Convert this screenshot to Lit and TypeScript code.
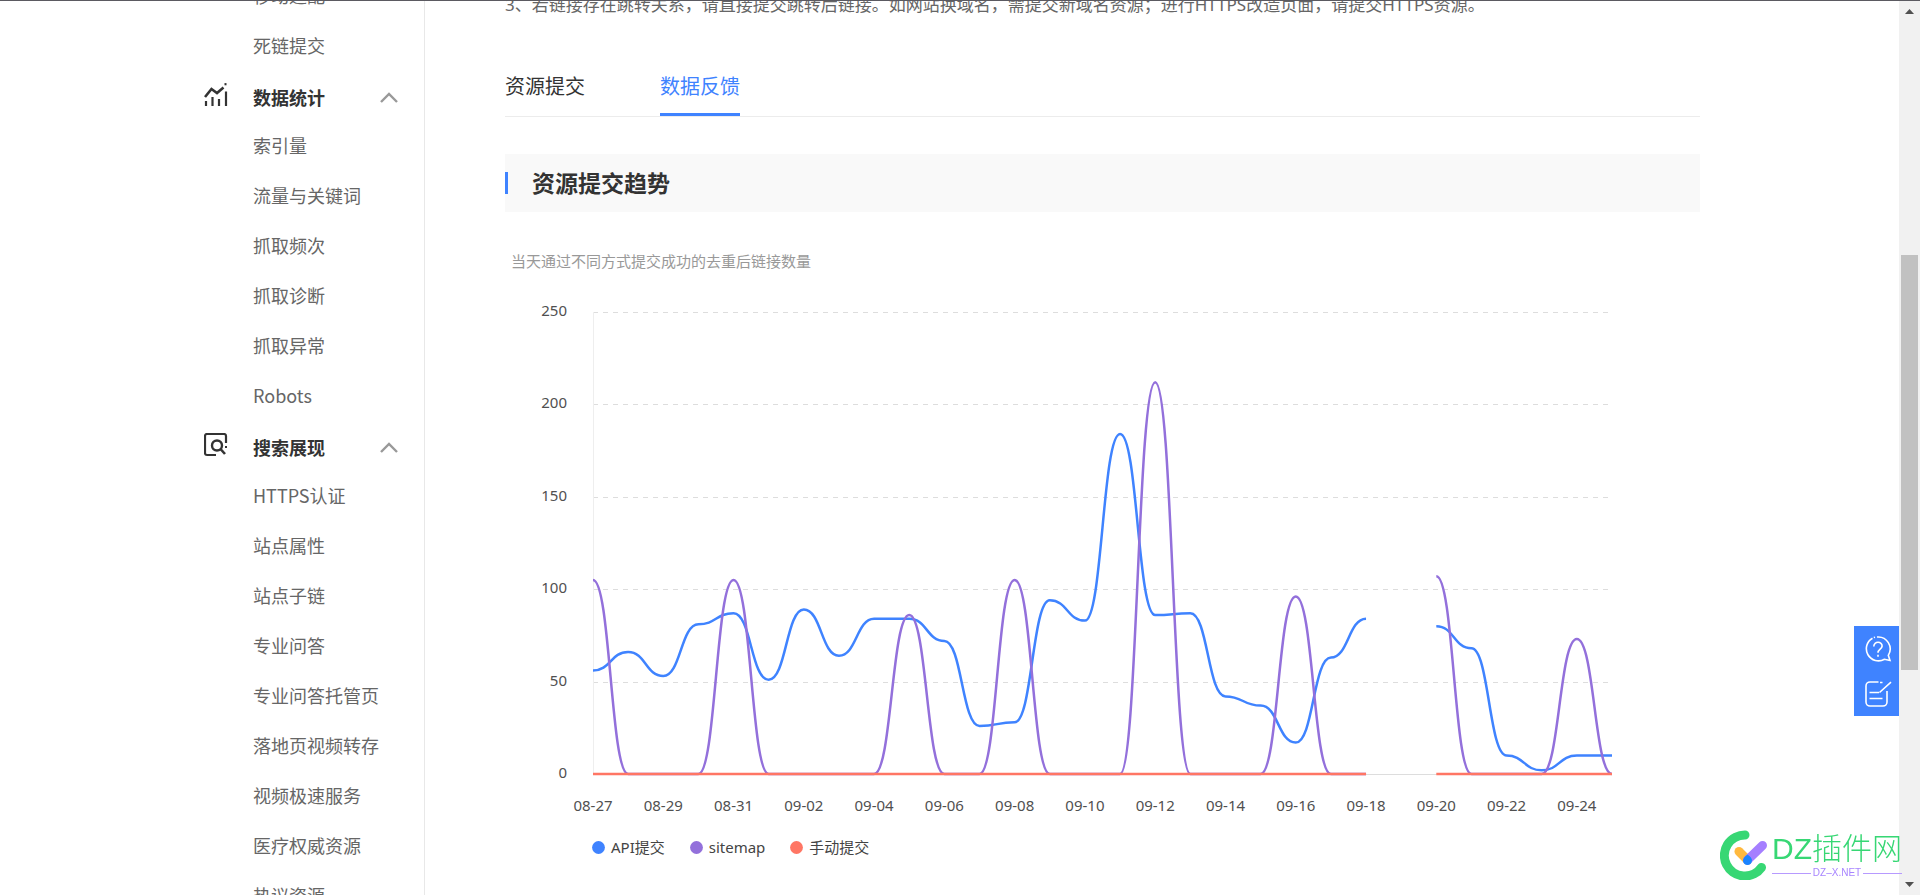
import { LitElement, html, svg, css } from "lit";
import { customElement, property, state } from "lit/decorators.js";
import { classMap } from "lit/directives/class-map.js";

type Value = number | null;

interface Series {
  name: string;
  color: string;
  width: number;
  data: Value[];
}

interface MenuGroup {
  title: string;
  icon: "stats" | "search";
  items: string[];
}

const leading = ["移动适配", "死链提交"];

const groups: MenuGroup[] = [
  {
    title: "数据统计",
    icon: "stats",
    items: ["索引量", "流量与关键词", "抓取频次", "抓取诊断", "抓取异常", "Robots"],
  },
  {
    title: "搜索展现",
    icon: "search",
    items: [
      "HTTPS认证",
      "站点属性",
      "站点子链",
      "专业问答",
      "专业问答托管页",
      "落地页视频转存",
      "视频极速服务",
      "医疗权威资源",
      "热议资源",
    ],
  },
];

const icons = {
  stats: html`<svg width="24" height="24" viewBox="0 0 24 24" fill="none" stroke="#333" stroke-width="2.200">
    <path d="M2 18v5M8.500 14v9M15 16v7M22 8.500V23" />
    <path d="M1 14 7.500 6l5.500 4 6.500-5.500" stroke-width="2.600" />
    <path d="M20.500 1.200h2" />
  </svg>`,
  search: html`<svg width="24" height="24" viewBox="0 0 24 24" fill="none" stroke="#333" stroke-width="2.200">
    <path d="M12 22H3a2 2 0 0 1-2-2V3a2 2 0 0 1 2-2h17a2 2 0 0 1 2 2v7" />
    <circle cx="13" cy="12.500" r="5" stroke-width="2.400" />
    <path d="m16.500 16 4.500 5" stroke-width="2.600" />
    <path d="M21 14h2" />
  </svg>`,
};

@customElement("side-menu")
export class SideMenu extends LitElement {
  static styles = css`
    :host {
      display: block;
      border-right: 1px solid #e8e8e8;
      font-family: "Noto Sans CJK SC", sans-serif;
    }
    .list {
      margin: 0;
      padding: 0;
      list-style: none;
    }
    .item {
      display: flex;
      align-items: center;
      height: 50px;
      padding-left: 49px;
      color: #666;
      font-size: 18px;
      line-height: 26px;
      text-decoration: none;
      white-space: nowrap;
    }
    .head {
      display: flex;
      align-items: center;
      box-sizing: border-box;
      width: 100%;
      height: 50px;
      padding: 4px 26px 0 0;
      border: 0;
      background: none;
      color: #333;
      font-family: inherit;
      font-size: 18px;
      font-weight: 700;
      line-height: 26px;
      text-align: left;
      cursor: pointer;
    }
    .icon {
      display: flex;
      width: 49px;
      padding-bottom: 4px;
    }
    .label {
      flex: 1;
    }
    .arrow.closed {
      transform: rotate(180deg);
    }
  `;

  @state() private closed: string[] = [];

  private toggle(title: string) {
    this.closed = this.closed.includes(title)
      ? this.closed.filter((t) => t !== title)
      : [...this.closed, title];
  }

  private renderItems(items: string[]) {
    return html`<ul class="list">
      ${items.map((item) => html`<li><a class="item" href="#">${item}</a></li>`)}
    </ul>`;
  }

  render() {
    return html`<nav aria-label="侧边导航">
      ${this.renderItems(leading)}
      ${groups.map((group) => {
        const closed = this.closed.includes(group.title);
        return html`
          <button class="head" aria-expanded=${closed ? "false" : "true"} @click=${() => this.toggle(group.title)}>
            <span class="icon">${icons[group.icon]}</span>
            <span class="label">${group.title}</span>
            <svg
              class=${classMap({ arrow: true, closed })}
              width="18"
              height="11"
              viewBox="0 0 18 11"
              fill="none"
              stroke="#999"
              stroke-width="2.400"
            >
              <path d="M1 10 9 2l8 8" />
            </svg>
          </button>
          ${closed ? null : this.renderItems(group.items)}
        `;
      })}
    </nav>`;
  }
}

const plot = { left: 88, right: 1107, top: 22, bottom: 484, width: 1195, height: 536 };

@customElement("trend-chart")
export class TrendChart extends LitElement {
  static styles = css`
    :host {
      display: block;
      color: #444;
      font-size: 15px;
    }
    .plot {
      display: block;
      width: 100%;
      height: auto;
    }
    .tick {
      fill: #505050;
      font-size: 15px;
    }
    .legend {
      display: flex;
      gap: 25px;
      margin: 0;
      padding: 11px 0 0 87px;
      list-style: none;
      line-height: 20px;
    }
    .entry {
      display: flex;
      align-items: center;
      gap: 6px;
    }
    .dot {
      width: 13px;
      height: 13px;
    }
  `;

  @property({ attribute: false }) labels: string[] = [];
  @property({ attribute: false }) series: Series[] = [];
  @property({ type: Number }) max = 250;

  private x(index: number) {
    return plot.left + ((plot.right - plot.left) * index) / (this.labels.length - 1);
  }

  private y(value: number) {
    return plot.bottom - ((plot.bottom - plot.top) * value) / this.max;
  }

  /** Smooth line that stays level at each point and breaks at missing days. */
  private path(data: Value[]) {
    let d = "";
    for (let i = 0; i < data.length; i++) {
      const value = data[i];
      if (value === null) continue;
      const x = this.x(i);
      const y = this.y(value);
      const prev = i > 0 ? data[i - 1] : null;
      if (prev === null) {
        d += `M${x} ${y}`;
        continue;
      }
      const mid = (this.x(i - 1) + x) / 2;
      d += `C${mid} ${this.y(prev)} ${mid} ${y} ${x} ${y}`;
    }
    return d;
  }

  render() {
    const ticks = [0, 50, 100, 150, 200, 250];
    return html`
      <svg class="plot" viewBox="0 0 ${plot.width} ${plot.height}" role="img" aria-label="资源提交趋势">
        ${ticks.map(
          (tick) => svg`
            <text class="tick" x="62" y=${this.y(tick) + 4} text-anchor="end">${tick}</text>
            <line x1=${plot.left} x2=${plot.right - 3} y1=${Math.round(this.y(tick)) + 0.5} y2=${
              Math.round(this.y(tick)) + 0.5
            } stroke="#ddd" stroke-dasharray=${tick ? "5 5" : "none"} />
          `,
        )}
        <line x1="88.500" x2="88.500" y1=${plot.top} y2=${plot.bottom} stroke="#eee" />
        ${this.labels.map((label, i) =>
          i % 2 ? null : svg`<text class="tick" x=${this.x(i)} y="521" text-anchor="middle">${label}</text>`,
        )}
        ${this.series.map(
          (s) => svg`<path d=${this.path(s.data)} fill="none" stroke=${s.color} stroke-width=${s.width} />`,
        )}
      </svg>
      <ul class="legend">
        ${this.series.map(
          (s) => html`<li class="entry">
            <svg class="dot" viewBox="0 0 13 13"><circle cx="6.500" cy="6.500" r="6.400" fill=${s.color} /></svg>
            <span>${s.name}</span>
          </li>`,
        )}
      </ul>
    `;
  }
}

const days = Array.from({ length: 30 }, (_, i) => {
  const day = 27 + i;
  return day <= 31 ? `08-${day}` : `09-${String(day - 31).padStart(2, "0")}`;
});

const spikes: Record<string, number> = {
  "08-27": 105,
  "08-31": 105,
  "09-05": 86,
  "09-08": 105,
  "09-12": 212,
  "09-16": 96,
  "09-20": 107,
  "09-24": 73,
};

const trend: Series[] = [
  {
    name: "API提交",
    color: "#3f83ff",
    width: 2.5,
    data: [
      56, 66, 53, 81, 87, 51, 89, 64, 84, 84, 72, 26, 28, 94, 83, 184, 86, 87, 42, 37, 17, 63, 84, null, 80, 68,
      10, 2, 10, 10,
    ],
  },
  {
    name: "sitemap",
    color: "#9370db",
    width: 2.5,
    data: days.map((day) => (day === "09-19" ? null : spikes[day] ?? 0)),
  },
  {
    name: "手动提交",
    color: "#ff7664",
    width: 2.5,
    data: days.map((day) => (day === "09-19" ? null : 0)),
  },
];

@customElement("app-root")
export class AppRoot extends LitElement {
  static styles = css`
    :host {
      display: grid;
      grid-template-columns: minmax(0, 1fr) 21px;
      box-sizing: border-box;
      height: 100vh;
      overflow: hidden;
      border-top: 1px solid #5b5a61;
      background: #fff;
      color: #333;
      font-family: "Noto Sans", "Noto Sans CJK SC", sans-serif;
    }
    .page {
      display: grid;
      grid-template-columns: 221px minmax(0, 1fr);
      gap: 80px;
      min-height: 0;
      padding: 0 199px 0 204px;
      overflow: hidden;
    }
    .menu {
      margin-top: -31px;
    }
    .note {
      margin: -9px 0 0;
      color: #666;
      font-size: 17px;
      line-height: 26px;
      white-space: nowrap;
    }
    .tabs {
      display: flex;
      gap: 75px;
      margin-top: 38px;
      border-bottom: 1px solid #ececec;
    }
    .tab {
      height: 60px;
      padding: 4px 0 0;
      border: 0;
      border-bottom: 3px solid transparent;
      background: none;
      color: #333;
      font-family: inherit;
      font-size: 20px;
      line-height: 28px;
      cursor: pointer;
    }
    .tab.active {
      border-color: #3f83ff;
      color: #3f83ff;
    }
    .title {
      display: flex;
      align-items: center;
      gap: 24px;
      height: 58px;
      margin: 37px 0 0;
      background: #f9f9f9;
      font-size: 23px;
      line-height: 32px;
    }
    .title::before {
      content: "";
      width: 3px;
      height: 22px;
      background: #3f83ff;
    }
    .caption {
      margin: 37px 0 17px;
      padding-left: 6px;
      color: #999;
      font-size: 15px;
      line-height: 24px;
    }
    .scroll {
      display: grid;
      grid-template-rows: 21px 1fr 21px;
      justify-items: center;
      align-items: center;
      background: #f1f1f1;
    }
    .track {
      display: grid;
      grid-template-rows: 233fr 415fr 204fr;
      width: 17px;
      height: 100%;
    }
    .thumb {
      grid-row: 2;
      background: #c1c1c1;
    }
    .tools {
      position: fixed;
      top: 626px;
      right: 21px;
      display: grid;
      background: #3f83ff;
    }
    .tool {
      display: grid;
      place-items: center;
      width: 45px;
      height: 45px;
      padding: 0 0 0 3px;
      border: 0;
      background: none;
      cursor: pointer;
    }
    .brand {
      position: fixed;
      right: 20px;
      bottom: 15px;
      display: flex;
      align-items: center;
      gap: 3px;
      color: #37d774;
      text-decoration: none;
    }
    .words {
      display: grid;
      width: 128px;
    }
    .name {
      font-family: "Liberation Sans", "Noto Sans CJK SC", sans-serif;
      font-size: 30px;
      font-weight: 300;
      line-height: 36px;
      white-space: nowrap;
    }
    .site {
      display: flex;
      align-items: center;
      gap: 2px;
      color: #a885ff;
      font-family: "Liberation Sans", sans-serif;
      font-size: 10px;
      line-height: 12px;
    }
    .site::before,
    .site::after {
      content: "";
      flex: 1;
      height: 1px;
      background: #b79aff;
    }
  `;

  @state() private tab = "数据反馈";

  render() {
    return html`
      <div class="page">
        <side-menu class="menu"></side-menu>
        <main>
          <p class="note">
            3、若链接存在跳转关系，请直接提交跳转后链接。如网站换域名，需提交新域名资源；进行HTTPS改造页面，请提交HTTPS资源。
          </p>
          <div class="tabs" role="tablist">
            ${["资源提交", "数据反馈"].map(
              (name) => html`<button
                class=${classMap({ tab: true, active: this.tab === name })}
                role="tab"
                aria-selected=${this.tab === name ? "true" : "false"}
                @click=${() => (this.tab = name)}
              >
                ${name}
              </button>`,
            )}
          </div>
          <h2 class="title">资源提交趋势</h2>
          <p class="caption">当天通过不同方式提交成功的去重后链接数量</p>
          <trend-chart .labels=${days} .series=${trend}></trend-chart>
        </main>
      </div>
      <div class="scroll" aria-hidden="true">
        <svg width="9" height="5" viewBox="0 0 9 5"><path d="M0 5 4.500 0 9 5z" fill="#505050" /></svg>
        <div class="track"><div class="thumb"></div></div>
        <svg width="9" height="5" viewBox="0 0 9 5"><path d="M0 0h9L4.500 5z" fill="#505050" /></svg>
      </div>
      <div class="tools">
        <button class="tool" aria-label="帮助">
          <svg width="28" height="28" viewBox="0 0 28 28" fill="none" stroke="#fff" stroke-width="1.600">
            <path d="M8.500 3.200A12 12 0 1 0 20.500 24.300l5.500 1.200-1.700-5.200A12 12 0 0 0 13 2" />
            <path d="M9.800 2.600 11 2.200" />
            <path d="M9.800 11.500c0-5.800 8.600-5.300 8.300-.4-.2 3-4.100 3.100-4.100 6.600M14 19.700v2" />
          </svg>
        </button>
        <button class="tool" aria-label="反馈">
          <svg width="28" height="28" viewBox="0 0 28 28" fill="none" stroke="#fff" stroke-width="1.600">
            <path d="M14.500 2H6a4 4 0 0 0-4 4v16a4 4 0 0 0 4 4h13a4 4 0 0 0 4-4V11" />
            <path d="M16 2.500h2.500M5.500 12.500H15M5.500 18.500h13M15.500 12.500 27 2.200" />
          </svg>
        </button>
      </div>
      <a class="brand" href="#">
        <svg width="49" height="50" viewBox="0 0 49 50" fill="none" stroke-linecap="round">
          <path d="M25 5A20.500 20.500 0 1 0 41.500 37.500" stroke="#37d774" stroke-width="9" />
          <path d="m19 21.500 8.500 8.500" stroke="#ffb93e" stroke-width="9" />
          <path d="M27.500 30 42.500 15.500" stroke="#a57fff" stroke-width="9" />
          <path d="M27.500 24.500q4.500 3 4.500 6a4.500 4.500 0 0 1-9 0q0-3 4.500-6z" fill="#1a84ff" />
        </svg>
        <span class="words">
          <span class="name">DZ插件网</span>
          <span class="site">DZ–X.NET</span>
        </span>
      </a>
    `;
  }
}
